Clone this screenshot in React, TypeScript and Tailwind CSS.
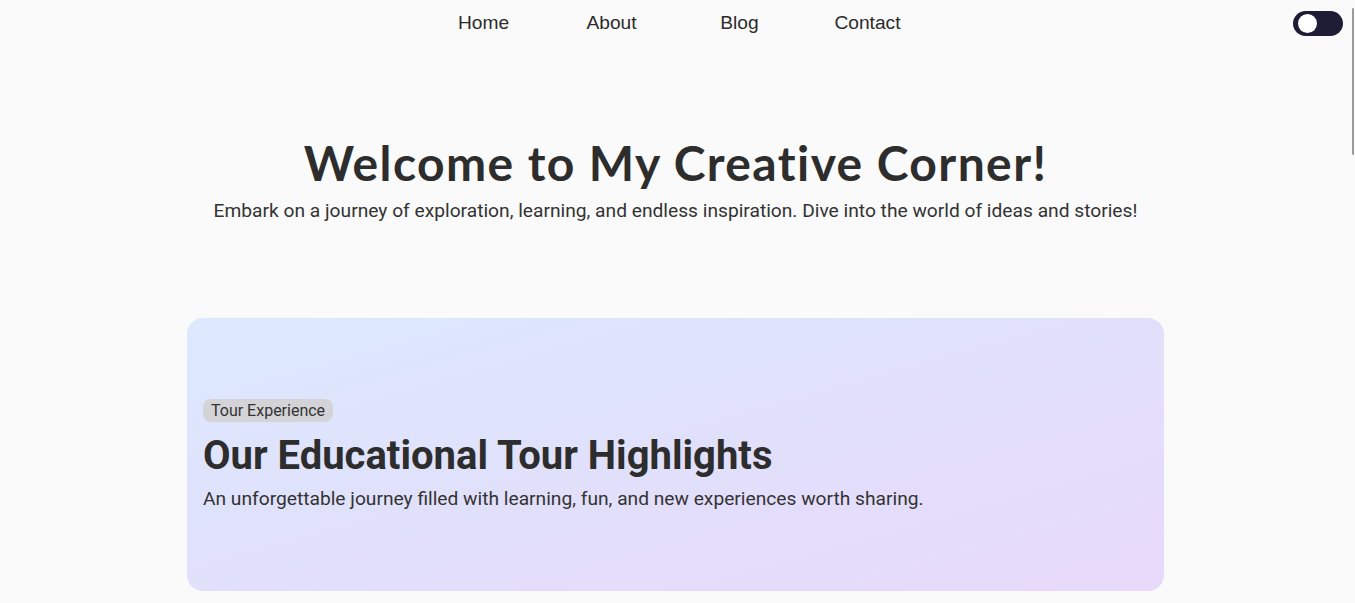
import { useState } from "react";

const links = ["Home", "About", "Blog", "Contact"];

function ThemeToggle() {
  const [dark, setDark] = useState(false);
  return (
    <button
      onClick={() => setDark(!dark)}
      className="absolute top-[11px] right-[8px] flex h-[25px] w-[50px] items-center rounded-full bg-[#1f1d36] px-[5px]"
      aria-label="Toggle theme"
    >
      <span
        className={
          dark
            ? "h-[19px] w-[19px] translate-x-[21px] rounded-full bg-white"
            : "h-[19px] w-[19px] rounded-full bg-white"
        }
      />
    </button>
  );
}

export default function App() {
  return (
    <div className="relative min-h-[603px] bg-[#fafafa] pr-[4px] text-[#333]">
      <header className="relative">
        <nav className="flex justify-center pt-[12px] pb-[11px]">
          {links.map((link) => (
            <a
              key={link}
              href="#"
              className="w-32 text-center font-['Liberation_Sans',Arial,sans-serif] text-[19.2px] leading-[22px] text-[#2b2b2b]"
            >
              {link}
            </a>
          ))}
        </nav>
        <ThemeToggle />
      </header>

      <section className="mt-[89px] text-center">
        <h1 className="font-['Lato',sans-serif] text-[48px] leading-[58px] font-bold tracking-[1.4px] text-[#2d2d2d]">
          Welcome to My Creative Corner!
        </h1>
        <p className="mt-[4px] font-['Roboto',sans-serif] text-[19.2px] leading-[29px] text-[#333]">
          Embark on a journey of exploration, learning, and endless inspiration.
          Dive into the world of ideas and stories!
        </p>
      </section>

      <section className="mx-auto mt-[93px] flex h-[273px] w-[977px] flex-col rounded-[16px] bg-linear-to-br from-[#dbe9fe] via-[#e1e0fb] to-[#e8d9fb] px-4 pt-[81px] font-['Roboto',sans-serif]">
        <span className="self-start rounded-[8px] bg-[#d4d4d8] px-2 text-[16px] leading-[23px] text-[#333]">
          Tour Experience
        </span>
        <h2 className="mt-[10px] text-[40px] leading-[48px] font-bold text-[#2d2d2d]">
          Our Educational Tour Highlights
        </h2>
        <p className="mt-[4px] text-[19.2px] leading-[29px] text-[#333]">
          An unforgettable journey filled with learning, fun, and new
          experiences worth sharing.
        </p>
      </section>

      {/* thin overlay scrollbar */}
      <div className="absolute top-[8px] right-[1px] h-[147px] w-[2px] rounded-full bg-[#9a9a9a]" />
    </div>
  );
}
